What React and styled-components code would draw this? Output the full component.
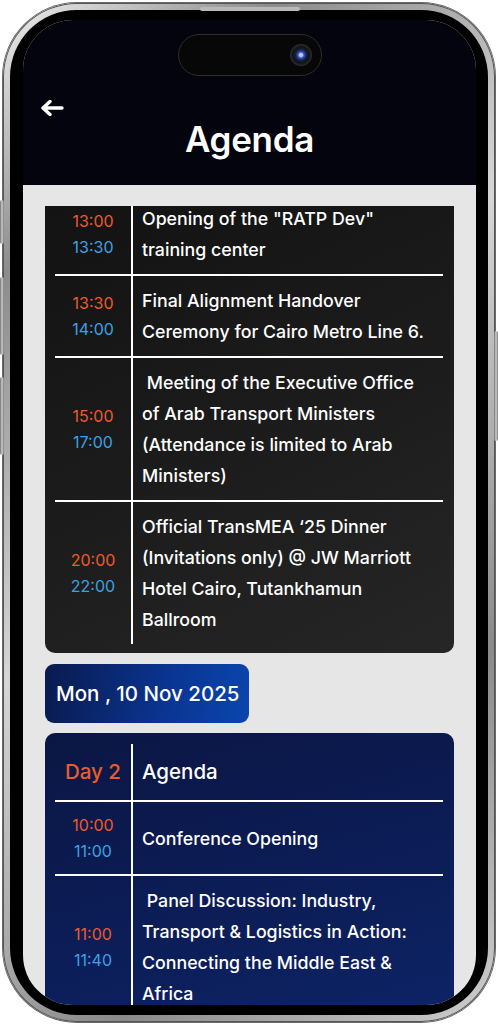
import React from "react";
import styled, { createGlobalStyle } from "styled-components";

const GlobalStyle = createGlobalStyle`
  html, body { margin: 0; padding: 0; background: #ffffff; }
  body { font-family: Inter, "Noto Sans", sans-serif; -webkit-font-smoothing: antialiased; }
  * { box-sizing: border-box; }
`;

const Stage = styled.div`
  width: 498px;
  height: 1024px;
  padding: 3px 3px 2px 3px;
`;

const Phone = styled.div`
  position: relative;
  width: 492px;
  height: 1019px;
  padding: 7px;
  border-radius: 74px;
  background: linear-gradient(135deg, #f0f0f0 0%, #8c8c8c 18%, #d6d6d6 45%, #8a8a8a 75%, #cfcfcf 100%);
  box-shadow: inset 0 0 0 1px #555, 0 0 0 1px #6a6a6a;
`;

const SideButton = styled.span`
  position: absolute;
  top: ${(p) => p.$top}px;
  ${(p) => (p.$right ? "right: -3px;" : "left: -3px;")}
  width: 4px;
  height: ${(p) => p.$h}px;
  border-radius: 2px;
  background: linear-gradient(90deg, #6e6e6e, #cfcfcf, #7a7a7a);
`;

const Speaker = styled.span`
  position: absolute;
  top: 4px;
  left: 197px;
  width: 100px;
  height: 4px;
  border-radius: 2px;
  background: #b9b9b9;
`;

const Bezel = styled.div`
  height: 100%;
  background: #000;
  border-radius: 67px;
  padding: 10px 12px 10px 13px;
  display: flex;
`;

const Screen = styled.div`
  flex: 1;
  border-radius: 50px;
  overflow: hidden;
  display: flex;
  flex-direction: column;
  background: #e6e6e6;
`;

const Header = styled.header`
  flex-shrink: 0;
  height: 165px;
  background: #03040e;
  display: flex;
  flex-direction: column;
  padding-top: 14px;
`;

const Island = styled.div`
  align-self: center;
  width: 144px;
  height: 42px;
  border-radius: 21px;
  background: #070707;
  border: 1px solid #2e2e2e;
  display: flex;
  align-items: center;
  justify-content: flex-end;
  padding-right: 9px;
`;

const Camera = styled.span`
  width: 22px;
  height: 22px;
  border-radius: 50%;
  background: radial-gradient(circle at 50% 50%, #b8c8ff 0 1.5px, #3355c0 3px, #14204a 5.5px, #121212 8px, #2e2e2e 11px);
`;

const BackButton = styled.button`
  align-self: flex-start;
  margin: 24px 0 0 17px;
  padding: 0;
  border: 0;
  background: none;
  width: 24px;
  height: 16px;
  display: block;
  cursor: pointer;
  svg { display: block; }
`;

const Title = styled.h1`
  margin: 1px 0 0;
  text-align: center;
  color: #fff;
  font-size: 35px;
  line-height: 44px;
  font-weight: 600;
  letter-spacing: -0.3px;
`;

const Content = styled.main`
  flex: 1;
  min-height: 0;
  display: flex;
  flex-direction: column;
  padding: 21px 22px 0;
`;

const Viewport = styled.div`
  flex: 1;
  min-height: 0;
  overflow: hidden;
`;

const Feed = styled.div`
  display: flex;
  flex-direction: column;
  gap: 10px;
  margin-top: -23px;
`;

const Card = styled.section`
  border-radius: 10px;
  padding: 11px 11px 9px 10px;
  background: ${(p) =>
    p.$tone === "navy"
      ? "linear-gradient(165deg, #0b1643 0%, #0c1d57 55%, #0d2466 100%)"
      : "linear-gradient(155deg, #121212 0%, #1c1c1c 55%, #262626 100%)"};
`;

const Row = styled.div`
  display: grid;
  grid-template-columns: 78px 1fr;
  border-bottom: 2px solid #fff;
  &:last-child { border-bottom: none; }
`;

const TimeCell = styled.div`
  border-right: 2px solid #fff;
  display: flex;
  flex-direction: column;
  justify-content: center;
  align-items: center;
  padding: 10px 0;
  font-size: 16px;
  line-height: 26px;
  font-weight: 400;
`;

const Time = styled.span`
  color: ${(p) => (p.$end ? "#3aa2e4" : "#ee5a2a")};
`;

const Topic = styled.div`
  display: flex;
  align-items: center;
  padding: 9px 12px 9px 9px;
  color: #fff;
  font-size: 17.8px;
  line-height: 31px;
  font-weight: 500;
`;

const HeadDay = styled.div`
  border-right: 2px solid #fff;
  display: flex;
  align-items: center;
  justify-content: center;
  padding: 13px 0;
  color: #ee5a2a;
  font-size: 20.5px;
  line-height: 30px;
  font-weight: 500;
`;

const HeadLabel = styled.div`
  display: flex;
  align-items: center;
  padding: 13px 9px;
  color: #fff;
  font-size: 20.5px;
  line-height: 30px;
  font-weight: 500;
`;

const DateChip = styled.div`
  align-self: flex-start;
  width: 204px;
  height: 59px;
  margin-top: 1px;
  border-radius: 9px;
  padding: 0 11px;
  display: flex;
  align-items: center;
  white-space: nowrap;
  color: #fff;
  font-size: 20.5px;
  font-weight: 500;
  background: linear-gradient(100deg, #0a1a4e 0%, #0a3592 60%, #0a46ad 100%);
`;

const BackArrow = () => (
  <svg width="24" height="16" viewBox="0 0 24 16" fill="none">
    <path d="M22 8H3.5M10 1.5L3 8l7 6.5" stroke="#fff" strokeWidth="3.4" strokeLinecap="round" strokeLinejoin="round" />
  </svg>
);

const dayOne = [
  { start: "13:00", end: "13:30", text: "Opening of the \"RATP Dev\" training center" },
  { start: "13:30", end: "14:00", text: "Final Alignment Handover Ceremony for Cairo Metro Line 6." },
  { start: "15:00", end: "17:00", text: "\u00a0Meeting of the Executive Office of Arab Transport Ministers (Attendance is limited to Arab Ministers)" },
  { start: "20:00", end: "22:00", text: "Official TransMEA \u201825 Dinner (Invitations only) @ JW Marriott Hotel Cairo, Tutankhamun Ballroom" },
];

const dayTwo = [
  { start: "10:00", end: "11:00", text: "Conference Opening" },
  { start: "11:00", end: "11:40", text: "\u00a0Panel Discussion: Industry, Transport & Logistics in Action: Connecting the Middle East & Africa" },
];

const SessionRow = ({ s }) => (
  <Row>
    <TimeCell>
      <Time>{s.start}</Time>
      <Time $end>{s.end}</Time>
    </TimeCell>
    <Topic>
      <span>{s.text}</span>
    </Topic>
  </Row>
);

export default function App() {
  return (
    <>
      <GlobalStyle />
      <Stage>
        <Phone>
          <Speaker />
          <SideButton $top={197} $h={44} />
          <SideButton $top={274} $h={78} />
          <SideButton $top={374} $h={78} />
          <SideButton $right $top={328} $h={110} />
          <Bezel>
            <Screen>
              <Header>
                <Island>
                  <Camera />
                </Island>
                <BackButton aria-label="Back">
                  <BackArrow />
                </BackButton>
                <Title>Agenda</Title>
              </Header>
              <Content>
                <Viewport>
                  <Feed>
                    <Card>
                      {dayOne.map((s) => (
                        <SessionRow key={s.start + s.text} s={s} />
                      ))}
                    </Card>
                    <DateChip>Mon , 10 Nov 2025</DateChip>
                    <Card $tone="navy">
                      <Row>
                        <HeadDay>Day 2</HeadDay>
                        <HeadLabel>Agenda</HeadLabel>
                      </Row>
                      {dayTwo.map((s) => (
                        <SessionRow key={s.start + s.text} s={s} />
                      ))}
                    </Card>
                  </Feed>
                </Viewport>
              </Content>
            </Screen>
          </Bezel>
        </Phone>
      </Stage>
    </>
  );
}
